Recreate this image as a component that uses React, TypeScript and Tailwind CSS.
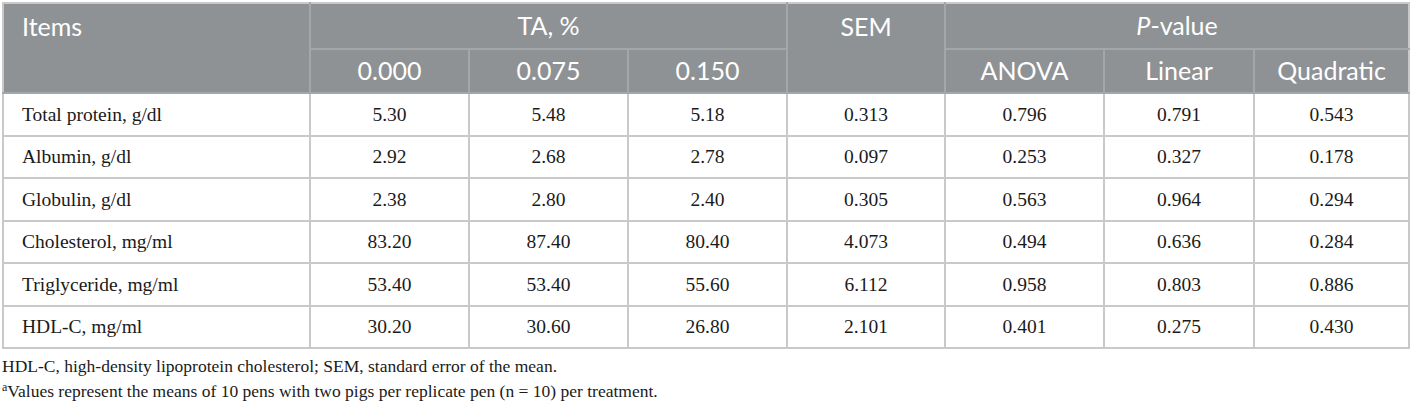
import React from 'react';

// One row of the serum biochemistry table
interface Row {
  item: string;
  values: string[];
}

const rows: Row[] = [
  { item: 'Total protein, g/dl', values: ['5.30', '5.48', '5.18', '0.313', '0.796', '0.791', '0.543'] },
  { item: 'Albumin, g/dl', values: ['2.92', '2.68', '2.78', '0.097', '0.253', '0.327', '0.178'] },
  { item: 'Globulin, g/dl', values: ['2.38', '2.80', '2.40', '0.305', '0.563', '0.964', '0.294'] },
  { item: 'Cholesterol, mg/ml', values: ['83.20', '87.40', '80.40', '4.073', '0.494', '0.636', '0.284'] },
  { item: 'Triglyceride, mg/ml', values: ['53.40', '53.40', '55.60', '6.112', '0.958', '0.803', '0.886'] },
  { item: 'HDL-C, mg/ml', values: ['30.20', '30.60', '26.80', '2.101', '0.401', '0.275', '0.430'] },
];

const head = 'border-2 border-[#a4a7a9] font-normal text-white';
const cell = 'border-2 border-[#c9c9c9] text-center';

const App: React.FC = () => {
  return (
    <div className="w-[1411px] h-[405px] bg-white pl-[2px] pt-[2px] font-['Liberation_Serif',serif] text-[#1a1a1a]">
      <table className="table-fixed border-collapse w-[1406px] border-2 border-[#c9c9c9]">
        <colgroup>
          <col className="w-[307px]" />
          <col className="w-[159px]" />
          <col className="w-[159px]" />
          <col className="w-[159px]" />
          <col className="w-[158px]" />
          <col className="w-[159px]" />
          <col className="w-[150px]" />
          <col className="w-[155px]" />
        </colgroup>
        <thead className="bg-[#8e9295] font-['Lato',sans-serif] text-[25px]">
          <tr className="h-[46px]">
            <th rowSpan={2} className={`${head} text-left align-top pl-[18px] pt-[4px] border-l-[#c9c9c9] border-t-[#c9c9c9]`}>
              Items
            </th>
            <th colSpan={3} className={`${head} border-t-[#c9c9c9]`}>TA, %</th>
            <th rowSpan={2} className={`${head} align-top pt-[4px] border-t-[#c9c9c9]`}>SEM</th>
            <th colSpan={3} className={`${head} border-t-[#c9c9c9] border-r-[#c9c9c9]`}>
              <i>P</i>-value
            </th>
          </tr>
          <tr className="h-[44px]">
            <th className={head}>0.000</th>
            <th className={head}>0.075</th>
            <th className={head}>0.150</th>
            <th className={head}>ANOVA</th>
            <th className={head}>Linear</th>
            <th className={`${head} border-r-[#c9c9c9]`}>Quadratic</th>
          </tr>
        </thead>
        <tbody className="text-[19.5px]">
          {rows.map((row) => (
            <tr key={row.item} className="h-[42.5px]">
              <td className="border-2 border-[#c9c9c9] pl-[18px]">{row.item}</td>
              {row.values.map((v, i) => (
                <td key={i} className={cell}>
                  {v}
                </td>
              ))}
            </tr>
          ))}
        </tbody>
      </table>
      <div className="pt-[5px] text-[17.5px] leading-[25px]">
        <p>HDL-C, high-density lipoprotein cholesterol; SEM, standard error of the mean.</p>
        <p>
          <sup className="text-[12px]">a</sup>Values represent the means of 10 pens with two pigs per replicate pen (n = 10) per treatment.
        </p>
      </div>
    </div>
  );
};

export default App;
